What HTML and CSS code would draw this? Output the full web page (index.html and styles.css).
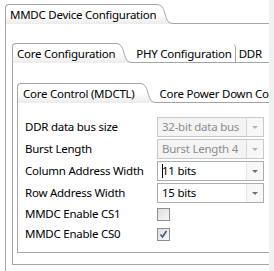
FILE: index.html
```html
<!DOCTYPE html>
<html>
<head>
    <title>MMDC Device Configuration</title>
    <link rel="stylesheet" href="styles.css">
</head>
<body>
    <div class="view">
        <div class="folder outer">
            <div class="tabrow">
                <div class="tab selected">MMDC Device Configuration</div>
                <svg class="curve" width="18" height="20" viewBox="0 0 18 20">
                    <defs>
                        <linearGradient id="g1" x1="0" y1="0" x2="0" y2="20" gradientUnits="userSpaceOnUse">
                            <stop offset="0.5" stop-color="#fff"/>
                            <stop offset="1" stop-color="#ebebeb"/>
                        </linearGradient>
                    </defs>
                    <path d="M0,0.5 C6,0.5 7,3 9,10 C11,17 12,19.5 18,19.5 L18,20 L0,20 Z" fill="url(#g1)"/>
                    <path d="M0,0.5 C6,0.5 7,3 9,10 C11,17 12,19.5 18,19.5" fill="none" stroke="#a5a5a5"/>
                </svg>
                <div class="filler"></div>
            </div>
            <div class="tabbody outer-body">

                <div class="folder">
                    <div class="tabrow">
                        <div class="tab selected">Core Configuration</div>
                        <svg class="curve" width="18" height="20" viewBox="0 0 18 20">
                            <path d="M0,0.5 C6,0.5 7,3 9,10 C11,17 12,19.5 18,19.5 L18,20 L0,20 Z" fill="url(#g1)"/>
                            <path d="M0,0.5 C6,0.5 7,3 9,10 C11,17 12,19.5 18,19.5" fill="none" stroke="#a5a5a5"/>
                        </svg>
                        <div class="tab plain">PHY Configuration</div>
                        <div class="tab plain last">DDR</div>
                        <div class="filler"></div>
                    </div>
                    <div class="tabbody middle-body">

                        <div class="folder">
                            <div class="tabrow">
                                <div class="tab selected inner-tab">Core Control (MDCTL)</div>
                                <svg class="curve" width="18" height="20" viewBox="0 0 18 20">
                                    <path d="M0,0.5 C6,0.5 7,3 9,10 C11,17 12,19.5 18,19.5 L18,20 L0,20 Z" fill="url(#g1)"/>
                                    <path d="M0,0.5 C6,0.5 7,3 9,10 C11,17 12,19.5 18,19.5" fill="none" stroke="#a5a5a5"/>
                                </svg>
                                <div class="tab plain">Core Power Down Configuration</div>
                                <div class="filler"></div>
                            </div>
                            <div class="tabbody inner-body">
                                <div class="form">
                                    <label>DDR data bus size</label>
                                    <div class="combo disabled">
                                        <span class="value">32-bit data bus</span>
                                        <span class="button"><span class="arrow"></span></span>
                                    </div>

                                    <label>Burst Length</label>
                                    <div class="combo disabled">
                                        <span class="value">Burst Length 4</span>
                                        <span class="button"><span class="arrow"></span></span>
                                    </div>

                                    <label>Column Address Width</label>
                                    <div class="combo">
                                        <span class="value"><span class="caret"></span>11 bits</span>
                                        <span class="button"><span class="arrow"></span></span>
                                    </div>

                                    <label>Row Address Width</label>
                                    <div class="combo">
                                        <span class="value">15 bits</span>
                                        <span class="button"><span class="arrow"></span></span>
                                    </div>

                                    <label class="check-label">MMDC Enable CS1</label>
                                    <div class="check-cell"><span class="checkbox"></span></div>

                                    <label class="check-label">MMDC Enable CS0</label>
                                    <div class="check-cell">
                                        <span class="checkbox">
                                            <svg width="11" height="11" viewBox="0 0 11 11">
                                                <path d="M2.5,5.5 L4.5,8 L8.5,2" fill="none" stroke="#3f5687" stroke-width="1.6"/>
                                            </svg>
                                        </span>
                                    </div>
                                </div>
                            </div>
                        </div>

                    </div>
                </div>

            </div>
        </div>
    </div>
    <div class="scroll-edge"></div>
</body>
</html>
```

FILE: styles.css
```css
html,
body {
    margin: 0;
}

body {
    width: 274px;
    height: 271px;
    overflow: hidden;
    display: flex;
    background-color: #f0f0f0;
    font-family: "Noto Sans", sans-serif;
    font-size: 11.5px;
    letter-spacing: -0.25px;
    color: #000;
}

.view {
    width: 269px;
    height: 271px;
    flex: none;
    overflow: hidden;
    box-sizing: border-box;
    padding: 4px 0 0 5px;
    background-color: #fff;
}

.scroll-edge {
    flex: 1;
    background-color: #f0f0f0;
}

/* tab folders */
.folder.outer {
    width: 300px;
}

.tabrow {
    display: flex;
    height: 20px;
    white-space: nowrap;
}

.tab {
    box-sizing: border-box;
    height: 20px;
    line-height: 19px;
    flex: none;
}

.tab.selected {
    border-top: 1px solid #a5a5a5;
    border-left: 1px solid #a5a5a5;
    border-top-left-radius: 4px;
    padding: 0 0 0 4px;
    background: linear-gradient(#fff 50%, #ebebeb 100%);
}

.tab.inner-tab {
    padding: 0 4px 0 5px;
}

.tab.plain {
    padding: 0 3px 0 3px;
    border-bottom: 1px solid #a5a5a5;
    border-right: 1px solid #a5a5a5;
    border-top: 1px solid transparent;
    border-top-right-radius: 5px;
}

.tab.plain.last {
    padding-right: 40px;
}

.curve {
    display: block;
    flex: none;
}

.filler {
    flex: 1;
    border-bottom: 1px solid #a5a5a5;
}

.tabbody {
    border-left: 1px solid #a5a5a5;
    border-right: 1px solid #a5a5a5;
    border-bottom: 1px solid #a5a5a5;
}

.outer-body {
    height: 260px;
    padding: 19px 0 0 6px;
}

.middle-body {
    padding: 20px 0 11px 4px;
}

.inner-body {
    padding: 14px 0 9px 7px;
}

/* form */
.form {
    display: grid;
    grid-template-columns: 132px 107px;
    row-gap: 2px;
    align-items: center;
}

.form label {
    line-height: 20px;
    white-space: nowrap;
}

.combo {
    display: flex;
    height: 20px;
    box-sizing: border-box;
    border: 1px solid #abadb3;
    background-color: #fff;
}

.combo .value {
    flex: 1;
    padding-left: 4px;
    line-height: 18px;
    white-space: nowrap;
    overflow: hidden;
}

.combo .button {
    width: 16px;
    flex: none;
    border-left: 1px solid #e6e6e6;
    background-color: #f7f7f7;
    display: flex;
    align-items: center;
    justify-content: center;
}

.arrow {
    width: 0;
    height: 0;
    border-left: 3px solid transparent;
    border-right: 3px solid transparent;
    border-top: 3px solid #707070;
}

.combo.disabled {
    border-color: #c8c8c8;
    background-color: #f4f4f4;
    color: #8c8c8c;
}

.combo.disabled .button {
    border-left-color: #d9d9d9;
}

.combo.disabled .arrow {
    border-top-color: #b3b3b3;
}

.caret {
    display: inline-block;
    width: 1px;
    height: 14px;
    margin-right: -1px;
    vertical-align: -3px;
    background-color: #000;
}

.check-label {
    line-height: 18px !important;
}

.check-cell {
    height: 18px;
    display: flex;
    align-items: center;
}

.checkbox {
    width: 13px;
    height: 13px;
    box-sizing: border-box;
    border: 1px solid #8e8f8f;
    background: linear-gradient(135deg, #dedede, #f8f8f8);
    display: flex;
    align-items: center;
    justify-content: center;
}
```
